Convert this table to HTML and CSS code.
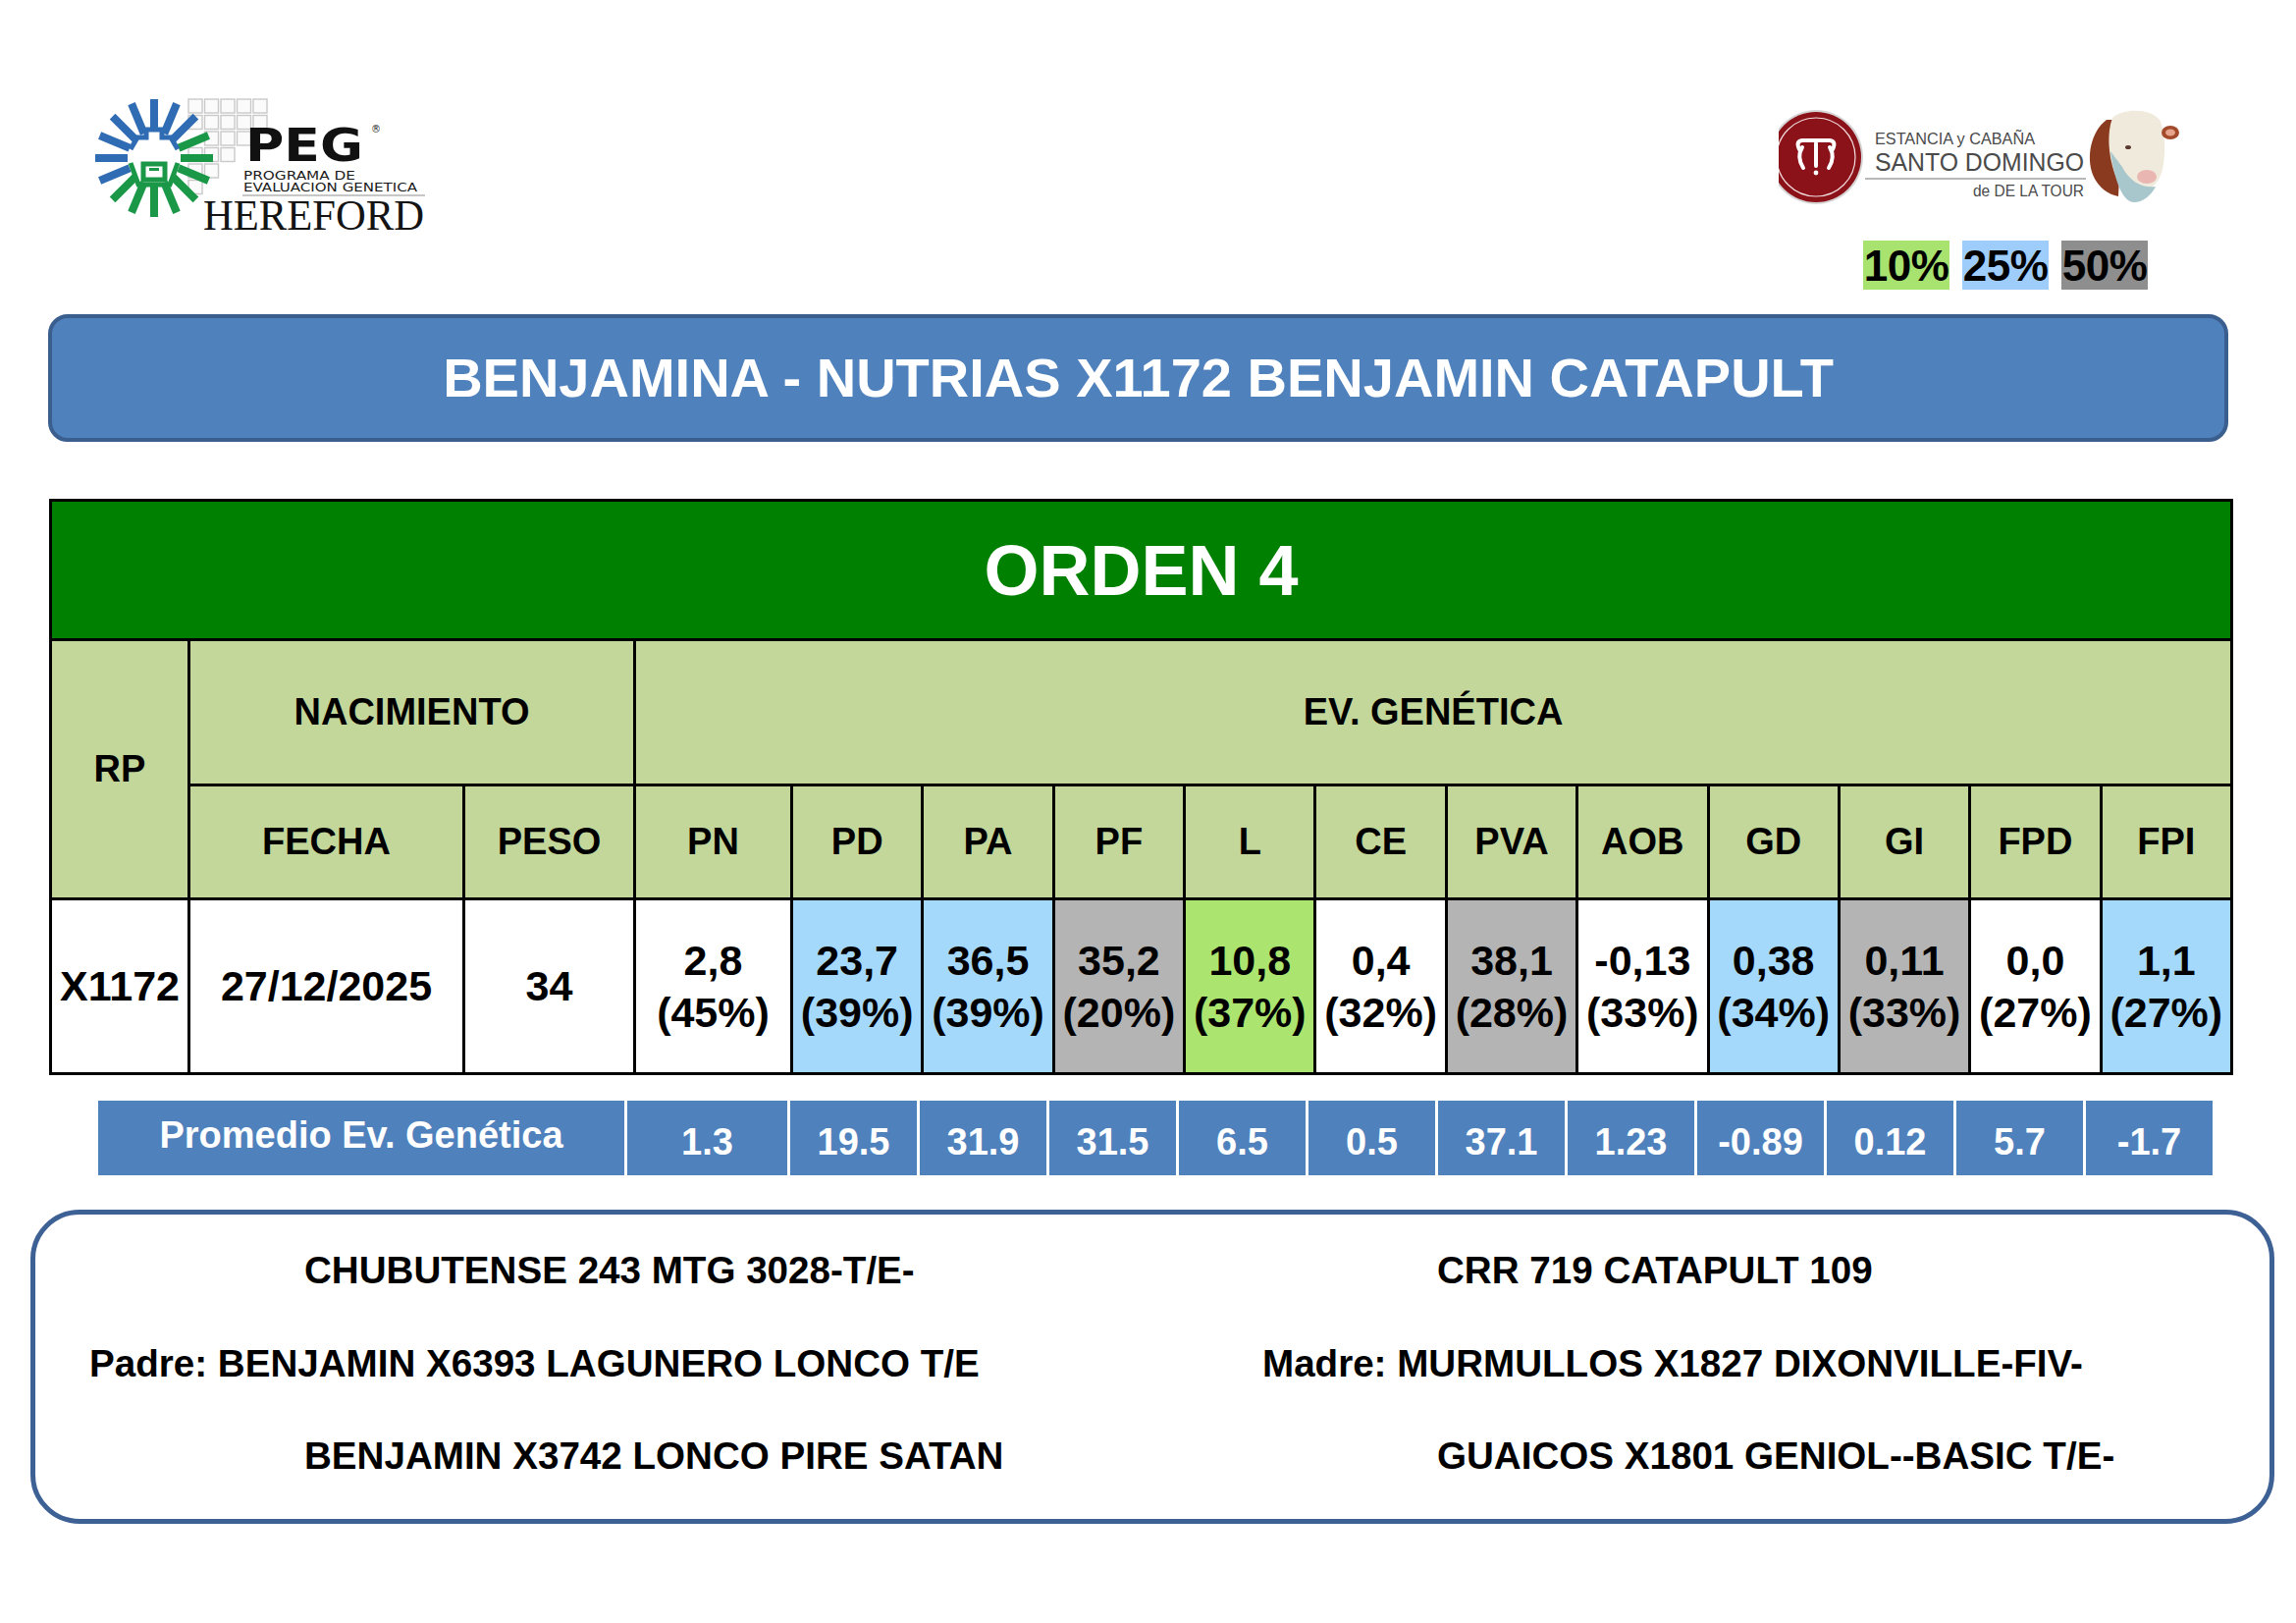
FILE: index.html
```html
<!DOCTYPE html>
<html lang="es">
<head>
<meta charset="utf-8">
<title>BENJAMINA - NUTRIAS X1172 BENJAMIN CATAPULT</title>
<link rel="stylesheet" href="styles.css">
</head>
<body>
<div class="page">
  <header class="top">
    <svg class="peg" viewBox="0 0 345 146" aria-label="PEG Hereford">
      <g class="squares">
        <rect x="95" y="1" width="14" height="14"/><rect x="111.5" y="1" width="14" height="14"/><rect x="128" y="1" width="14" height="14"/><rect x="144.5" y="1" width="14" height="14"/><rect x="161" y="1" width="14" height="14"/>
        <rect x="95" y="17.5" width="14" height="14"/><rect x="111.5" y="17.5" width="14" height="14"/><rect x="128" y="17.5" width="14" height="14"/><rect x="144.5" y="17.5" width="14" height="14"/><rect x="161" y="17.5" width="14" height="14"/>
        <rect x="111.5" y="34" width="14" height="14"/><rect x="128" y="34" width="14" height="14"/><rect x="144.5" y="34" width="14" height="14"/>
        <rect x="95" y="50.5" width="14" height="14"/><rect x="111.5" y="50.5" width="14" height="14"/><rect x="128" y="50.5" width="14" height="14"/>
        <rect x="95" y="67" width="14" height="14"/><rect x="111.5" y="67" width="14" height="14"/>
        <rect x="95" y="83.5" width="14" height="14"/>
      </g>
      <g class="rays-blue">
        <line x1="79.1" y1="41.9" x2="102.4" y2="18.6"/>
        <line x1="70.3" y1="36.1" x2="83" y2="5.6"/>
        <line x1="60" y1="34" x2="60" y2="1"/>
        <line x1="49.7" y1="36.1" x2="37" y2="5.6"/>
        <line x1="40.9" y1="41.9" x2="17.6" y2="18.6"/>
        <line x1="35.1" y1="50.7" x2="4.6" y2="38"/>
        <line x1="33" y1="61" x2="0" y2="61"/>
        <line x1="35.1" y1="71.3" x2="4.6" y2="84"/>
      </g>
      <g class="rays-green">
        <line x1="87" y1="61" x2="120" y2="61"/>
        <line x1="84.9" y1="50.7" x2="115.4" y2="38"/>
        <line x1="40.9" y1="80.1" x2="17.6" y2="103.4"/>
        <line x1="49.7" y1="85.9" x2="37" y2="116.4"/>
        <line x1="60" y1="88" x2="60" y2="121"/>
        <line x1="70.3" y1="85.9" x2="83" y2="116.4"/>
        <line x1="79.1" y1="80.1" x2="102.4" y2="103.4"/>
        <line x1="84.9" y1="71.3" x2="115.4" y2="84"/>
      </g>
      <path class="face-blue" d="M36 52 L43 40 L52 40 L52 32 L68 32 L68 40 L77 40 L84 52"/>
      <path class="face-green" d="M36 66 L44 88 L76 88 L84 66"/>
      <rect class="face-green" x="49" y="67" width="22" height="16"/>
      <rect class="face-mark" x="55" y="71" width="10" height="3"/>
      <text class="peg-big" x="153" y="64" textLength="120" lengthAdjust="spacingAndGlyphs">PEG</text>
      <text class="peg-r" x="281" y="35">®</text>
      <text class="peg-small" x="151" y="83" textLength="114" lengthAdjust="spacingAndGlyphs">PROGRAMA DE</text>
      <text class="peg-small" x="151" y="95" textLength="177" lengthAdjust="spacingAndGlyphs">EVALUACION GENETICA</text>
      <line class="peg-rule" x1="150" y1="99" x2="336" y2="99"/>
      <text class="peg-hereford" x="110" y="134" textLength="225" lengthAdjust="spacingAndGlyphs">HEREFORD</text>
    </svg>
    <div class="brand">
      <svg class="sd" viewBox="0 0 418 102" aria-label="Estancia y Cabaña Santo Domingo">
        <circle cx="38" cy="52" r="48" fill="#d6d6d6"/>
        <circle cx="38" cy="52" r="46" fill="#8c1219"/>
        <circle cx="38" cy="52" r="40" fill="none" stroke="#f0dede" stroke-width="1.2"/>
        <path class="sd-mark" d="M21 44 Q17 36 24 35 L52 35 Q59 36 55 44"/>
        <path class="sd-mark" d="M24 42 Q18 52 25 63"/>
        <path class="sd-mark" d="M52 42 Q58 52 51 63"/>
        <line class="sd-mark" x1="38" y1="38" x2="38" y2="61"/>
        <circle cx="38" cy="68" r="2.4" fill="#fff"/>
        <text class="sd-t1" x="98" y="39" textLength="163" lengthAdjust="spacingAndGlyphs">ESTANCIA y CABAÑA</text>
        <text class="sd-t2" x="98" y="66" textLength="213" lengthAdjust="spacingAndGlyphs">SANTO DOMINGO</text>
        <line x1="88" y1="74" x2="313" y2="74" stroke="#a0a0a0" stroke-width="1.5"/>
        <text class="sd-t1" x="198" y="92" textLength="113" lengthAdjust="spacingAndGlyphs">de DE LA TOUR</text>
        <path d="M334 14 C318 26 313 52 320 70 C326 84 336 90 346 92 L350 14 Z" fill="#8a3a1f"/>
        <path d="M340 12 C352 2 378 2 388 14 C395 28 394 55 390 68 C386 80 378 86 368 86 C356 86 346 80 342 68 C336 50 334 28 340 12 Z" fill="#efeadb"/>
        <path d="M338 46 C342 75 350 98 362 98 C372 98 380 90 384 82 C372 84 358 78 350 62 Z" fill="#a8c7cc"/>
        <ellipse cx="399" cy="27" rx="9" ry="7" fill="#a24a2a"/>
        <ellipse cx="399" cy="27" rx="5" ry="3.5" fill="#e7a48d"/>
        <ellipse cx="356" cy="42" rx="3" ry="2" fill="#5a3a30"/>
        <ellipse cx="375" cy="72" rx="10" ry="7" fill="#e9b6b1"/>
      </svg>
      <div class="legend">
        <span class="lg-green">10%</span>
        <span class="lg-blue">25%</span>
        <span class="lg-gray">50%</span>
      </div>
    </div>
  </header>

  <div class="title-bar">BENJAMINA - NUTRIAS X1172 BENJAMIN CATAPULT</div>

  <table class="grid">
    <colgroup>
      <col class="c-rp"><col class="c-fecha"><col class="c-peso"><col class="c-pn">
      <col class="c-ev" span="11">
    </colgroup>
    <tr class="r-orden"><td class="orden" colspan="15">ORDEN 4</td></tr>
    <tr class="r-h1">
      <th rowspan="2">RP</th>
      <th colspan="2">NACIMIENTO</th>
      <th colspan="12">EV. GENÉTICA</th>
    </tr>
    <tr class="r-h2">
      <th>FECHA</th><th>PESO</th><th>PN</th><th>PD</th><th>PA</th><th>PF</th><th>L</th><th>CE</th><th>PVA</th><th>AOB</th><th>GD</th><th>GI</th><th>FPD</th><th>FPI</th>
    </tr>
    <tr class="r-data">
      <td class="w">X1172</td>
      <td class="w">27/12/2025</td>
      <td class="w">34</td>
      <td class="w"><span class="ln">2,8</span><span class="ln">(45%)</span></td>
      <td class="b"><span class="ln">23,7</span><span class="ln">(39%)</span></td>
      <td class="b"><span class="ln">36,5</span><span class="ln">(39%)</span></td>
      <td class="g"><span class="ln">35,2</span><span class="ln">(20%)</span></td>
      <td class="l"><span class="ln">10,8</span><span class="ln">(37%)</span></td>
      <td class="w"><span class="ln">0,4</span><span class="ln">(32%)</span></td>
      <td class="g"><span class="ln">38,1</span><span class="ln">(28%)</span></td>
      <td class="w"><span class="ln">-0,13</span><span class="ln">(33%)</span></td>
      <td class="b"><span class="ln">0,38</span><span class="ln">(34%)</span></td>
      <td class="g"><span class="ln">0,11</span><span class="ln">(33%)</span></td>
      <td class="w"><span class="ln">0,0</span><span class="ln">(27%)</span></td>
      <td class="b"><span class="ln">1,1</span><span class="ln">(27%)</span></td>
    </tr>
  </table>

  <div class="avg">
    <div class="avg-label">Promedio Ev. Genética</div>
    <div class="avg-val">1.3</div>
    <div class="avg-val">19.5</div>
    <div class="avg-val">31.9</div>
    <div class="avg-val">31.5</div>
    <div class="avg-val">6.5</div>
    <div class="avg-val">0.5</div>
    <div class="avg-val">37.1</div>
    <div class="avg-val">1.23</div>
    <div class="avg-val">-0.89</div>
    <div class="avg-val">0.12</div>
    <div class="avg-val">5.7</div>
    <div class="avg-val">-1.7</div>
  </div>

  <section class="pedigree">
    <div class="ped-col ped-left">
      <div class="ped-gp">CHUBUTENSE 243 MTG 3028-T/E-</div>
      <div class="ped-parent">Padre: BENJAMIN X6393 LAGUNERO LONCO T/E</div>
      <div class="ped-gp">BENJAMIN X3742 LONCO PIRE SATAN</div>
    </div>
    <div class="ped-col ped-right">
      <div class="ped-gp">CRR 719 CATAPULT 109</div>
      <div class="ped-parent">Madre: MURMULLOS X1827 DIXONVILLE-FIV-</div>
      <div class="ped-gp">GUAICOS X1801 GENIOL--BASIC T/E-</div>
    </div>
  </section>
</div>
</body>
</html>
```

FILE: styles.css
```css
* { box-sizing: border-box; }

body {
  margin: 0;
  background: #ffffff;
  font-family: "Liberation Sans", Arial, Helvetica, sans-serif;
  color: #000;
}

.page {
  width: 2339px;
  height: 1653px;
  overflow: hidden;
}

/* ---------- header ---------- */
.top {
  display: flex;
  height: 320px;
}

.peg {
  width: 345px;
  height: 146px;
  margin: 100px 0 0 97px;
  flex: none;
}

.squares rect {
  fill: #fbfbfb;
  stroke: #c9c9c9;
  stroke-width: 1.4;
}

.rays-blue line {
  stroke: #2f6cb3;
  stroke-width: 8;
}

.rays-green line {
  stroke: #1a9848;
  stroke-width: 8;
}

.face-blue {
  fill: none;
  stroke: #2f6cb3;
  stroke-width: 5;
}

.face-green {
  fill: none;
  stroke: #1a9848;
  stroke-width: 5;
}

.face-mark {
  fill: #1a9848;
}

.peg-big {
  font-family: "DejaVu Sans", sans-serif;
  font-weight: bold;
  font-size: 46px;
  fill: #111;
}

.peg-r {
  font-family: "DejaVu Sans", sans-serif;
  font-size: 10px;
  fill: #222;
}

.peg-small {
  font-family: "DejaVu Sans", sans-serif;
  font-size: 11.5px;
  fill: #1a1a1a;
}

.peg-rule {
  stroke: #b5b5b5;
  stroke-width: 1.5;
}

.peg-hereford {
  font-family: "Liberation Serif", "Times New Roman", serif;
  font-size: 44px;
  fill: #141414;
}

.brand {
  margin: 108px 109px 0 auto;
  display: flex;
  flex-direction: column;
  flex: none;
}

.sd {
  width: 418px;
  height: 102px;
}

.sd-mark {
  fill: none;
  stroke: #ffffff;
  stroke-width: 4;
  stroke-linecap: round;
}

.sd-t1 {
  font-family: "Liberation Sans", sans-serif;
  font-size: 17px;
  fill: #4a4a4a;
}

.sd-t2 {
  font-family: "Liberation Sans", sans-serif;
  font-size: 26px;
  fill: #4a4a4a;
}

.legend {
  display: flex;
  gap: 13px;
  margin: 35px 0 0 86px;
}

.legend span {
  width: 88px;
  height: 50px;
  font-weight: bold;
  font-size: 44px;
  line-height: 52px;
  text-align: center;
  letter-spacing: -0.5px;
  white-space: nowrap;
}

.lg-green { background: #a9e36f; }
.lg-blue { background: #9fcdfb; }
.lg-gray { background: #8e8e8e; }

/* ---------- title ---------- */
.title-bar {
  margin-left: 49px;
  width: 2221px;
  height: 130px;
  background: #4f81bd;
  border: 4px solid #3a5e8d;
  border-radius: 20px;
  color: #ffffff;
  font-weight: bold;
  font-size: 56px;
  line-height: 122px;
  text-align: center;
  white-space: nowrap;
}

/* ---------- table ---------- */
.grid {
  margin: 58px 0 0 50px;
  width: 2222px;
  border-collapse: collapse;
  table-layout: fixed;
}

.c-rp { width: 141px; }
.c-fecha { width: 280px; }
.c-peso { width: 174px; }
.c-pn { width: 160px; }
.c-ev { width: 133.36px; }

.grid td,
.grid th {
  border: 3px solid #000;
  padding: 0;
  text-align: center;
  vertical-align: middle;
  white-space: nowrap;
}

.r-orden { height: 142px; }
.r-h1 { height: 148px; }
.r-h2 { height: 116px; }
.r-data { height: 178px; }

.orden {
  background: #008000;
  color: #ffffff;
  font-weight: bold;
  font-size: 72px;
}

.grid th {
  background: #c4d79b;
  font-weight: bold;
  font-size: 38px;
}

.r-data td {
  font-weight: bold;
  font-size: 43px;
  line-height: 53px;
}

.ln { display: block; }

.w { background: #ffffff; }
.b { background: #a5d9fc; }
.g { background: #b4b4b4; }
.l { background: #abe56f; }

/* ---------- averages ---------- */
.avg {
  display: grid;
  grid-template-columns: 536px 163px repeat(11, 129px);
  gap: 3px;
  margin: 26px 0 0 100px;
  height: 76px;
}

.avg > div {
  background: #4f81bd;
  color: #ffffff;
  font-weight: bold;
  font-size: 38px;
  text-align: center;
  white-space: nowrap;
}

.avg-label {
  line-height: 70px;
}

.avg-val {
  padding-top: 11px;
  line-height: 63px;
}

/* ---------- pedigree ---------- */
.pedigree {
  margin: 35px 0 0 31px;
  width: 2286px;
  height: 320px;
  border: 5px solid #3d6194;
  border-radius: 50px;
  display: grid;
  grid-template-columns: 1138px 1fr;
  padding-top: 10px;
}

.ped-col > div {
  font-weight: bold;
  font-size: 38.6px;
  line-height: 94.5px;
  white-space: nowrap;
}

.ped-left .ped-parent { padding-left: 55px; }
.ped-left .ped-gp { padding-left: 274px; }
.ped-right .ped-parent { padding-left: 112px; }
.ped-right .ped-gp { padding-left: 290px; }
```
